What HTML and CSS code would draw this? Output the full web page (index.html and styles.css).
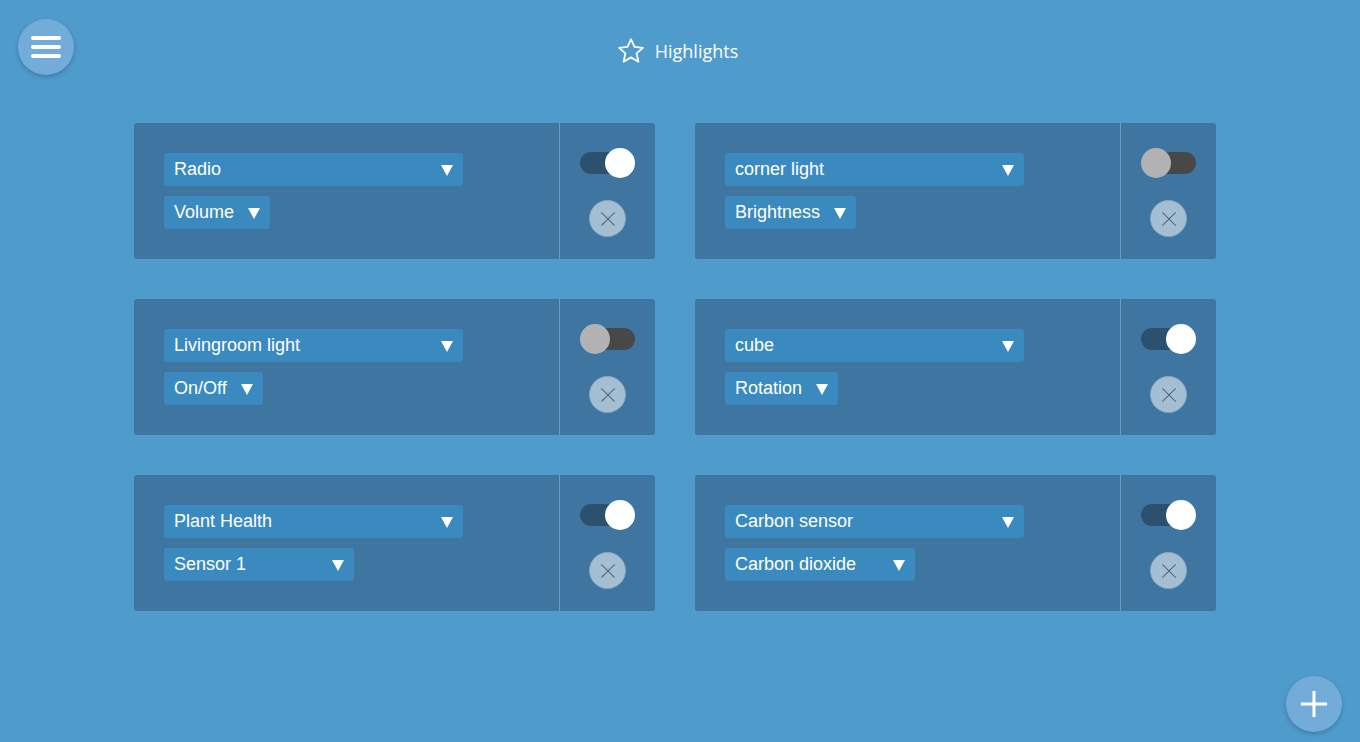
FILE: index.html
```html
<!DOCTYPE html>
<html lang="en">
<head>
    <meta charset="UTF-8">
    <meta name="viewport" content="width=device-width, initial-scale=1.0">
    <title>Highlights</title>
    <link rel="stylesheet" href="styles.css">
</head>
<body>
    <button class="fab menu-btn" aria-label="Menu">
        <span></span><span></span><span></span>
    </button>

    <header class="title">
        <svg class="star" width="28" height="28" viewBox="0 0 28 28">
            <path d="M14 2.2l3.5 7.7 8.4.9-6.3 5.6 1.8 8.3L14 20.4l-7.4 4.3 1.8-8.3-6.3-5.6 8.4-.9z" fill="none" stroke="#fff" stroke-width="1.8" stroke-linejoin="round"/>
        </svg>
        <span>Highlights</span>
    </header>

    <main class="grid">
        <div class="card">
            <div class="card-main">
                <div class="select wide"><span>Radio</span><i class="arrow"></i></div>
                <div class="select"><span>Volume</span><i class="arrow"></i></div>
            </div>
            <div class="card-side">
                <div class="toggle on"><b></b></div>
                <button class="remove" aria-label="Remove"></button>
            </div>
        </div>
        <div class="card">
            <div class="card-main">
                <div class="select wide"><span>corner light</span><i class="arrow"></i></div>
                <div class="select"><span>Brightness</span><i class="arrow"></i></div>
            </div>
            <div class="card-side">
                <div class="toggle"><b></b></div>
                <button class="remove" aria-label="Remove"></button>
            </div>
        </div>
        <div class="card">
            <div class="card-main">
                <div class="select wide"><span>Livingroom light</span><i class="arrow"></i></div>
                <div class="select"><span>On/Off</span><i class="arrow"></i></div>
            </div>
            <div class="card-side">
                <div class="toggle"><b></b></div>
                <button class="remove" aria-label="Remove"></button>
            </div>
        </div>
        <div class="card">
            <div class="card-main">
                <div class="select wide"><span>cube</span><i class="arrow"></i></div>
                <div class="select"><span>Rotation</span><i class="arrow"></i></div>
            </div>
            <div class="card-side">
                <div class="toggle on"><b></b></div>
                <button class="remove" aria-label="Remove"></button>
            </div>
        </div>
        <div class="card">
            <div class="card-main">
                <div class="select wide"><span>Plant Health</span><i class="arrow"></i></div>
                <div class="select mid"><span>Sensor 1</span><i class="arrow"></i></div>
            </div>
            <div class="card-side">
                <div class="toggle on"><b></b></div>
                <button class="remove" aria-label="Remove"></button>
            </div>
        </div>
        <div class="card">
            <div class="card-main">
                <div class="select wide"><span>Carbon sensor</span><i class="arrow"></i></div>
                <div class="select mid"><span>Carbon dioxide</span><i class="arrow"></i></div>
            </div>
            <div class="card-side">
                <div class="toggle on"><b></b></div>
                <button class="remove" aria-label="Remove"></button>
            </div>
        </div>
    </main>

    <button class="fab add-btn" aria-label="Add"></button>
</body>
</html>
```

FILE: styles.css
```css
body {
    margin: 0;
    height: 742px;
    overflow: hidden;
    background-color: #4e9bcc;
    font-family: "Liberation Sans", Arial, sans-serif;
    color: #fff;
}
.fab {
    position: absolute;
    width: 56px;
    height: 56px;
    border: none;
    border-radius: 50%;
    background-color: #73acd8;
    box-shadow: 0 2px 4px rgba(30, 70, 110, 0.35);
    padding: 0;
    cursor: pointer;
}
.menu-btn {
    left: 18px;
    top: 19px;
    display: flex;
    flex-direction: column;
    align-items: center;
    justify-content: center;
    gap: 5px;
}
.menu-btn span {
    display: block;
    width: 30px;
    height: 4px;
    border-radius: 2px;
    background-color: #fff;
}
.add-btn {
    left: 1286px;
    top: 676px;
}
.add-btn::before, .add-btn::after {
    content: "";
    position: absolute;
    left: 50%;
    top: 50%;
    background-color: #fff;
    transform: translate(-50%, -50%);
}
.add-btn::before {
    width: 26px;
    height: 3px;
}
.add-btn::after {
    width: 3px;
    height: 26px;
}
.title {
    display: flex;
    justify-content: center;
    align-items: center;
    gap: 10px;
    height: 28px;
    padding: 37px 5px 0 0;
    font-family: "Open Sans", sans-serif;
    font-size: 18px;
}
.grid {
    display: grid;
    grid-template-columns: 521px 521px;
    grid-auto-rows: 136px;
    gap: 40px;
    margin: 58px 0 0 134px;
}
.card {
    display: flex;
    background-color: #3e75a1;
    border-radius: 3px;
}
.card-main {
    width: 395px;
    padding: 30px 0 0 30px;
    border-right: 1px solid #6f9bc0;
    display: flex;
    flex-direction: column;
    align-items: flex-start;
    gap: 10px;
}
.card-side {
    flex: 1;
    display: flex;
    flex-direction: column;
    align-items: center;
    padding-top: 25px;
    gap: 22px;
}
.select {
    display: flex;
    align-items: center;
    justify-content: space-between;
    gap: 14px;
    height: 33px;
    padding: 0 10px;
    box-sizing: border-box;
    background-color: #3b8abf;
    border-radius: 3px;
    font-size: 18px;
}
.select.wide {
    width: 299px;
}
.select.mid {
    width: 190px;
}
.arrow {
    width: 0;
    height: 0;
    border-left: 6px solid transparent;
    border-right: 6px solid transparent;
    border-top: 11px solid #fff;
    margin-top: 1px;
}
.toggle {
    position: relative;
    width: 55px;
    height: 30px;
}
.toggle::before {
    content: "";
    position: absolute;
    left: 4px;
    right: 0;
    top: 4px;
    height: 22px;
    border-radius: 11px;
    background-color: #484848;
}
.toggle b {
    position: absolute;
    left: 0;
    top: 0;
    width: 30px;
    height: 30px;
    border-radius: 50%;
    background-color: #b2b2b2;
}
.toggle.on::before {
    left: 0;
    right: 4px;
    background-color: #2b516f;
}
.toggle.on b {
    left: auto;
    right: 0;
    background-color: #fff;
}
.remove {
    position: relative;
    width: 37px;
    height: 37px;
    padding: 0;
    border: 1px solid #8aa6be;
    border-radius: 50%;
    background-color: #a4bed3;
    cursor: pointer;
}
.remove::before, .remove::after {
    content: "";
    position: absolute;
    left: 50%;
    top: 50%;
    width: 19px;
    height: 1px;
    background-color: #4f6577;
    transform: translate(-50%, -50%) rotate(45deg);
}
.remove::after {
    transform: translate(-50%, -50%) rotate(-45deg);
}
```
